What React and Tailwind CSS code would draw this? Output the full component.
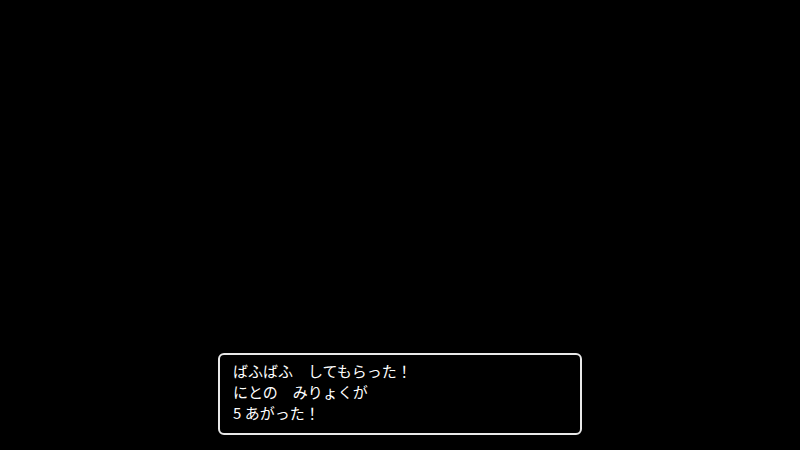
export default function App() {
  const lines = ['ばふばふ　してもらった！', 'にとの　みりょくが', '5 あがった！'];
  return (
    <div className="w-[800px] h-[450px] bg-black flex flex-col items-center justify-end pb-[15px]">
      <div
        className="w-[364px] h-[82px] border-2 border-[#e8e8e8] rounded-[6px] px-[13px] pt-[5px] text-white text-[15px] leading-[21px]"
        style={{ fontFamily: '"Noto Sans CJK JP", "Noto Sans", sans-serif' }}
      >
        {lines.map((l) => (
          <div key={l} className="whitespace-pre">{l}</div>
        ))}
      </div>
    </div>
  );
}
